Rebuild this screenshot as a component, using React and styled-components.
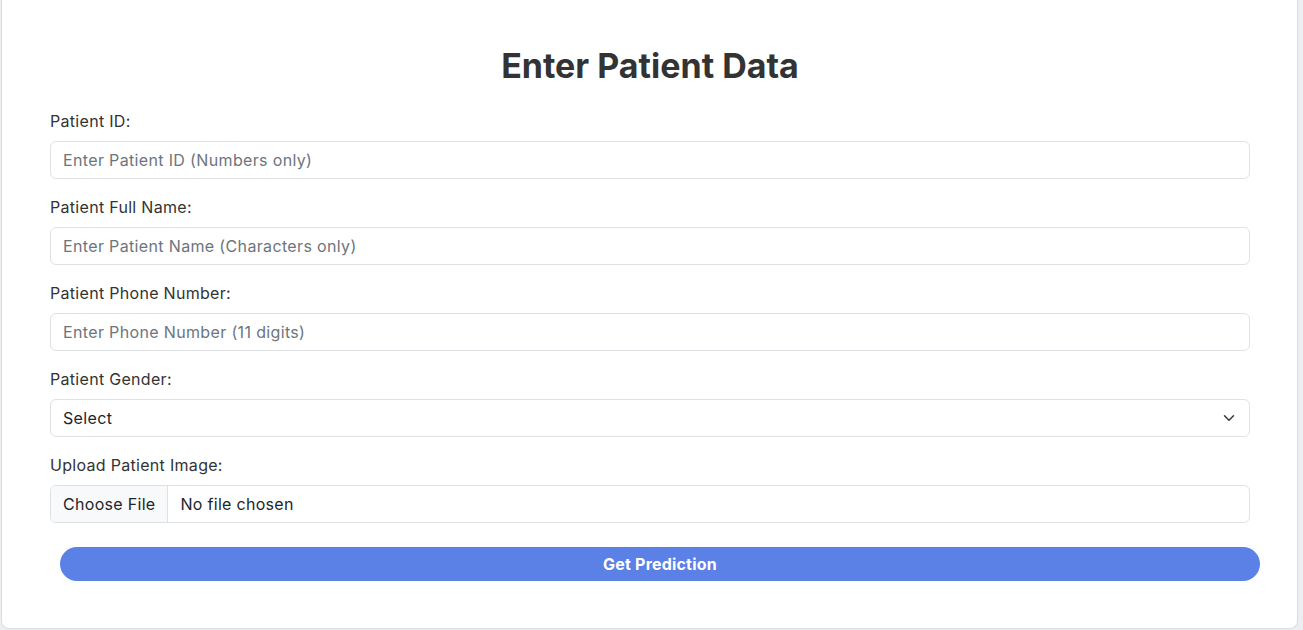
import React, { useState } from 'react'
import styled, { createGlobalStyle } from 'styled-components'

const GlobalStyle = createGlobalStyle`
  * { box-sizing: border-box; }
  html, body {
    margin: 0;
    padding: 0;
    background: #eceef1;
    font-family: Inter, "Open Sans", sans-serif;
    color: #333;
  }
`;

const Page = styled.div`
  padding: 0 5px 2px 1px;
`;

const Card = styled.div`
  background: #fff;
  border: 1px solid #dcdde0;
  border-top: none;
  border-radius: 0 0 8px 8px;
  padding: 47px 47px 47px 48px;
`;

const Title = styled.h2`
  margin: 0 0 24px;
  text-align: center;
  font-size: 34px;
  line-height: 38px;
  font-weight: 700;
  color: #333;
`;

const Form = styled.form`
  display: flex;
  flex-direction: column;
`;

const Group = styled.div`
  display: flex;
  flex-direction: column;
  margin-bottom: ${p => (p.$last ? '24px' : '16px')};
`;

const Label = styled.label`
  font-size: 16px;
  line-height: 24px;
  letter-spacing: 0.3px;
  color: #333;
  margin-bottom: 8px;
`;

const Input = styled.input`
  width: 100%;
  height: 38px;
  padding: 0 12px;
  font-family: inherit;
  font-size: 16px;
  letter-spacing: 0.35px;
  color: #212529;
  background: #fff;
  border: 1px solid #dee2e6;
  border-radius: 6px;
  outline: none;
  &::placeholder {
    color: #6c757d;
  }
`;

const SelectWrap = styled.div`
  position: relative;
`;

const Select = styled.select`
  width: 100%;
  height: 38px;
  padding: 0 36px 0 12px;
  font-family: inherit;
  font-size: 16px;
  letter-spacing: 0.35px;
  color: #212529;
  background: #fff;
  border: 1px solid #dee2e6;
  border-radius: 6px;
  appearance: none;
  outline: none;
`;

const Chevron = styled.svg`
  position: absolute;
  right: 15px;
  top: 13px;
  pointer-events: none;
`;

const FileInput = styled.input`
  width: 100%;
  height: 38px;
  font-family: inherit;
  font-size: 16px;
  letter-spacing: 0.3px;
  color: #212529;
  background: #fff;
  border: 1px solid #dee2e6;
  border-radius: 6px;
  overflow: hidden;
  padding: 0;
  &::file-selector-button {
    height: 36px;
    margin: 0 12px 0 0;
    padding: 0 12px;
    font-family: inherit;
    font-size: 16px;
    letter-spacing: 0.3px;
    color: #212529;
    background: #f8f9fa;
    border: none;
    border-right: 1px solid #dee2e6;
    border-radius: 0;
  }
`;

const Button = styled.button`
  width: 100%;
  height: 34px;
  margin-left: 10px;
  border: none;
  border-radius: 17px;
  background: #5b80e6;
  color: #fff;
  font-family: inherit;
  font-size: 16px;
  font-weight: 700;
  letter-spacing: 0.2px;
  cursor: pointer;
`;

const fields = [
  { id: 'pid', label: 'Patient ID:', placeholder: 'Enter Patient ID (Numbers only)' },
  { id: 'pname', label: 'Patient Full Name:', placeholder: 'Enter Patient Name (Characters only)' },
  { id: 'phone', label: 'Patient Phone Number:', placeholder: 'Enter Phone Number (11 digits)' },
];

export default function App() {
  const [gender, setGender] = useState('');
  return (
    <Page>
      <GlobalStyle />
      <Card>
        <Title>Enter Patient Data</Title>
        <Form onSubmit={e => e.preventDefault()}>
          {fields.map(f => (
            <Group key={f.id}>
              <Label htmlFor={f.id}>{f.label}</Label>
              <Input id={f.id} type="text" placeholder={f.placeholder} />
            </Group>
          ))}
          <Group>
            <Label htmlFor="gender">Patient Gender:</Label>
            <SelectWrap>
              <Select id="gender" value={gender} onChange={e => setGender(e.target.value)}>
                <option value="">Select</option>
                <option value="male">Male</option>
                <option value="female">Female</option>
              </Select>
              <Chevron width="12" height="12" viewBox="0 0 16 16">
                <path d="M2 5l6 6 6-6" fill="none" stroke="#343a40" strokeWidth="2" strokeLinecap="round" strokeLinejoin="round" />
              </Chevron>
            </SelectWrap>
          </Group>
          <Group $last>
            <Label htmlFor="img">Upload Patient Image:</Label>
            <FileInput id="img" type="file" />
          </Group>
          <Button type="submit">Get Prediction</Button>
        </Form>
      </Card>
    </Page>
  )
}
